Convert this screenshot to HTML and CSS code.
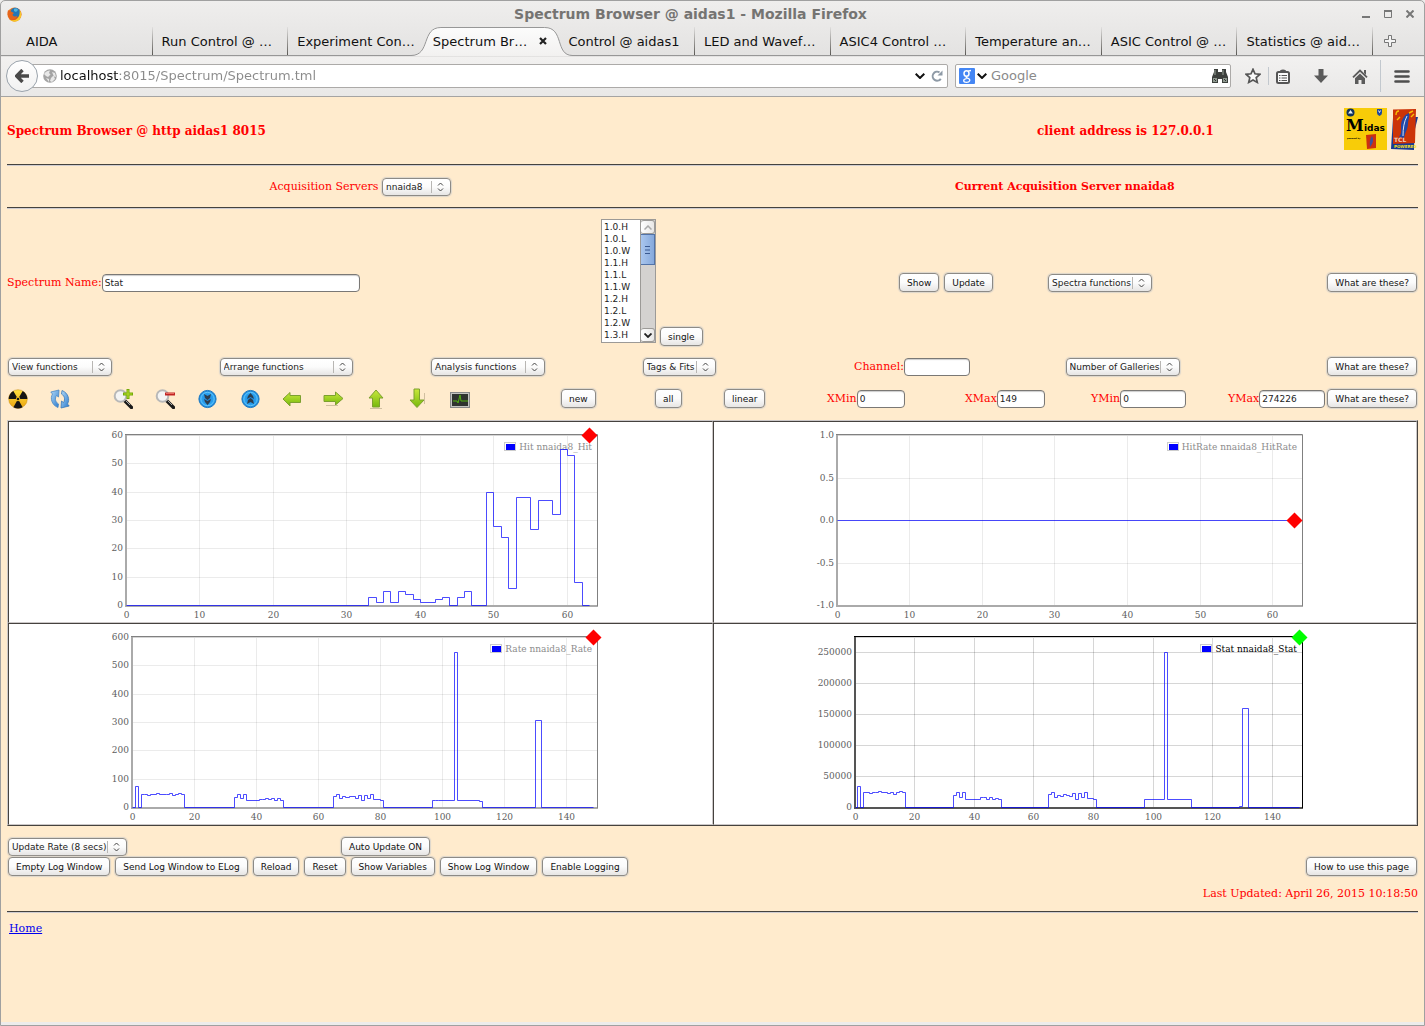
FILE: index.html
```
<!DOCTYPE html>
<html lang="en">
<head>
<meta charset="utf-8">
<title>Spectrum Browser @ aidas1</title>
<link rel="stylesheet" href="styles.css">
</head>
<body>
<svg class="defs" aria-hidden="true">
  <defs>
    <linearGradient id="green" x1="0" y1="0" x2="0" y2="1"><stop offset="0" stop-color="#c8e83c"/><stop offset="1" stop-color="#76b80c"/></linearGradient>
    <linearGradient id="blue" x1="0" y1="0" x2="1" y2="1"><stop offset="0" stop-color="#b5dcf8"/><stop offset="1" stop-color="#2878cc"/></linearGradient>
    <linearGradient id="yellow" x1="0" y1="0" x2="0" y2="1"><stop offset="0" stop-color="#ffe040"/><stop offset="1" stop-color="#eba410"/></linearGradient>
    <linearGradient id="ember" x1="0" y1="0" x2="1" y2="1"><stop offset="0" stop-color="#f28a1e"/><stop offset="1" stop-color="#d8401a"/></linearGradient>
    <linearGradient id="tabfill" x1="0" y1="0" x2="0" y2="1"><stop offset="0" stop-color="#fcfcfc"/><stop offset="1" stop-color="#f2f1f0"/></linearGradient>
    <radialGradient id="disc"><stop offset="0" stop-color="#1b84d8"/><stop offset="0.75" stop-color="#2ba4f2"/><stop offset="1" stop-color="#1b78cc"/></radialGradient>
  </defs>
</svg>

<div class="window">
  <header class="titlebar">
    <svg class="app-icon" width="15" height="15" viewBox="0 0 15 15" aria-hidden="true">
      <circle cx="7.500" cy="7.500" r="7" fill="url(#ember)"/>
      <circle cx="8.300" cy="5.800" r="5" fill="#2577b8"/>
      <path d="M7 2c2-1 4 0 4 1L9 5 7 4z" fill="#4fb4dd"/>
      <path d="M12.500 2.800C15 6 15 10 12 13c-3 2.400-7 2-9-.200 3 1 6 .500 8-2 1.500-2 2-5 1.500-8z" fill="#f8c828"/>
      <path d="M1 3c1 1 2 0 3 1.500L7 6 5.500 7.500C6 10 9 10 10.500 8.500 9.500 12 5 13.500 2.500 11 .500 9 .200 6 1 3z" fill="#e5641c"/>
    </svg>
    <h1 class="window-title">Spectrum Browser @ aidas1 - Mozilla Firefox</h1>
    <div class="window-buttons">
      <button aria-label="Minimize"><svg width="8" height="8" viewBox="0 0 8 8"><path d="M0 7h8" stroke="#777" stroke-width="2"/></svg></button>
      <button aria-label="Maximize"><svg width="8" height="8" viewBox="0 0 8 8"><path d="M.500 1v6.500h7V1" fill="none" stroke="#777"/><path d="M0 1h8" stroke="#777" stroke-width="2"/></svg></button>
      <button aria-label="Close"><svg width="8" height="8" viewBox="0 0 8 8"><path d="M0.500.500l7 7m0-7l-7 7" stroke="#777" stroke-width="2"/></svg></button>
    </div>
  </header>

  <nav class="tabs" aria-label="Tabs">
    <button class="tab">AIDA</button>
    <button class="tab">Run Control @ …</button>
    <button class="tab">Experiment Con…</button>
    <button class="tab active">
      <svg class="tab-shape" viewBox="0 0 162 29" preserveAspectRatio="none" aria-hidden="true"><path d="M0 29V28.500C20 28.500 10 .500 30 .500H134C154 .500 144 28.500 162 28.500V29z" fill="url(#tabfill)"/><path d="M0 28.500C20 28.500 10 .500 30 .500H134C154 .500 144 28.500 162 28.500" fill="none" stroke="#979797"/></svg>
      <span>Spectrum Br…</span>
      <svg class="tab-close" width="8" height="8" viewBox="0 0 8 8" aria-hidden="true"><path d="M1 1l6 6m0-6L1 7" stroke="#222" stroke-width="2.200"/></svg>
    </button>
    <button class="tab">Control @ aidas1</button>
    <button class="tab">LED and Wavef…</button>
    <button class="tab">ASIC4 Control …</button>
    <button class="tab">Temperature an…</button>
    <button class="tab">ASIC Control @ …</button>
    <button class="tab">Statistics @ aid…</button>
    <button class="new-tab" aria-label="New tab"><svg width="12" height="12" viewBox="0 0 12 12"><path d="M4.500.500h3v4h4v3h-4v4h-3v-4h-4v-3h4z" fill="#f4f4f4" stroke="#777"/></svg></button>
  </nav>

  <div class="toolbar">
    <button class="back" aria-label="Back"><svg width="14" height="14" viewBox="0 0 14 14"><path d="M7.500 1L1.700 7l5.800 6M2 7h12" fill="none" stroke="#4a4a4a" stroke-width="3.400"/></svg></button>
    <div class="field url">
      <svg width="14" height="14" viewBox="0 0 14 14" aria-hidden="true"><circle cx="7" cy="7" r="6.800" fill="#a4a4a4"/><path d="M1 5c2-3 4-3.500 6-3.500L6 4l1.500 1.500L5 8 3 7zM9 3l3 1 1 4-3-1-2 2-1 3 2 1 3-3zM3 9l3 1v3z" fill="#e8e8e8"/></svg>
      <input type="text" class="address" aria-label="Address" value="localhost:8015/Spectrum/Spectrum.tml">
      <button aria-label="History"><svg width="10" height="6" viewBox="0 0 10 6"><path d="M.700.700L5 5 9.300.700" fill="none" stroke="#111" stroke-width="2"/></svg></button>
      <button aria-label="Reload"><svg width="12" height="12" viewBox="0 0 12 12"><path d="M9.800 8.800A4.500 4.500 0 1 1 8.500 2.300" fill="none" stroke="#8e9aa6" stroke-width="2"/><path d="M6.500 5.500H11.500V.500z" fill="#8e9aa6"/></svg></button>
    </div>
    <div class="field search">
      <svg width="16" height="16" viewBox="0 0 16 16" aria-hidden="true"><rect width="16" height="16" rx="1" fill="#4486f4"/><ellipse cx="7.500" cy="5.500" rx="2.500" ry="2.800" fill="none" stroke="#fff" stroke-width="1.500"/><path d="M9 3.200l3-.700M7.500 8.300c-1 1 0 1.500 1.500 2 3 1 2 4-1.500 4s-4-3 0-3.700" fill="none" stroke="#fff" stroke-width="1.300"/></svg>
      <svg width="10" height="6" viewBox="0 0 10 6" aria-hidden="true"><path d="M.700.700L5 5 9.300.700" fill="none" stroke="#111" stroke-width="2"/></svg>
      <input type="search" aria-label="Search" placeholder="Google">
      <button aria-label="Find"><svg width="16" height="16" viewBox="0 0 16 16"><path d="M2 1h4v3h4V1h4v3l2 5v6h-6v-4H6v4H0V9l2-5z" fill="#3c403c"/><path d="M1 10h4v4H1zm10 0h4v4h-4z" fill="#8f9a90"/><path d="M3 2v5m8-5v5" stroke="#9aa59a"/><path d="M2 11l2 2m8-2l2 2" stroke="#333"/></svg></button>
    </div>
    <div class="tools">
      <button aria-label="Bookmark"><svg width="16" height="16" viewBox="0 0 16 16"><path d="M8 1.300l2 4.500 4.900.500-3.700 3.300 1.100 4.800L8 12l-4.300 2.400 1.100-4.800L1.100 6.300 6 5.800z" fill="#fafafa" stroke="#555" stroke-width="1.700"/></svg></button>
      <span class="divider"></span>
      <button aria-label="Bookmarks menu"><svg width="14" height="15" viewBox="0 0 14 15"><rect x="1" y="3" width="12" height="11" rx="1.500" fill="#fafafa" stroke="#555" stroke-width="2"/><path d="M4 3.500V1.500Q7-.500 10 1.500v2z" fill="#555"/><path d="M3 6.500h1.500M5.500 6.500H11M3 9h1.500M5.500 9H11M3 11.500h1.500M5.500 11.500H11" stroke="#555" stroke-width="1.200"/></svg></button>
      <button aria-label="Downloads"><svg width="14" height="14" viewBox="0 0 14 14"><path d="M4.500 0h5v6.500H14L7 14 0 6.500h4.500z" fill="#5b5b5b"/></svg></button>
      <button aria-label="Home page"><svg width="16" height="15" viewBox="0 0 16 15"><path d="M1 8.300L8 1.500l7 6.800" fill="none" stroke="#5b5b5b" stroke-width="1.800"/><path d="M8 4.500l5 4.800V15H9.500v-4h-3v4H3V9.300z" fill="#5b5b5b"/><path d="M12 1h2v5l-2-2z" fill="#5b5b5b"/></svg></button>
      <span class="divider tall"></span>
      <button aria-label="Menu"><svg width="16" height="13" viewBox="0 0 16 13"><path d="M1.500 1.500h13M1.500 6.500h13M1.500 11.500h13" stroke="#4e4e4e" stroke-width="2.600" stroke-linecap="round"/></svg></button>
    </div>
  </div>

  <main class="page">
    <div class="row banner">
      <h2>Spectrum Browser @ http aidas1 8015</h2>
      <h2>client address is 127.0.0.1</h2>
      <div class="logos">
        <svg width="43" height="42" viewBox="0 0 43 42" role="img" aria-label="Midas">
          <rect width="43" height="42" fill="#f8cc08"/>
          <circle cx="6.500" cy="4.500" r="4" fill="#12325e"/><path d="M4 5.500l2.500-3.500L9 5.500z" fill="#e8f0f4"/>
          <path d="M33 1h5v4q0 2-2.500 3Q33 7 33 5z" fill="#1f4a9c"/><path d="M34.500 2.500l1 2 1-2" fill="none" stroke="#e8e8f4"/>
          <text x="2" y="23" class="midas-m">M</text><text x="20" y="23" class="midas-rest">idas</text>
          <text x="3" y="31" class="midas-tiny">powered by</text>
          <path d="M22 27l10-1v14l-9 1z" fill="#cc3010"/><path d="M26 39q-1-7 2-11 2 4 0 8z" fill="#3b4f9c"/>
        </svg>
        <svg width="27" height="42" viewBox="0 0 27 42" role="img" aria-label="Tcl powered">
          <path d="M2 10l22-2-1 34L0 41z" fill="#173a94"/><path d="M22 9h5l-3 12z" fill="#173a94"/>
          <path d="M2 1.500L25 1l-1 34-22 1z" fill="#cc3408"/>
          <path d="M8 29c3-4 2-7 2-11 0-6 3-11 8-13 1 4-1 7-1 11 0 4-2 7-3 10l-1 4z" fill="#2148a8"/><path d="M12 28c0-8 1-14 4-20" stroke="#dce4f4" fill="none"/>
          <path d="M5 7q0-4 3-4M6 12l3-3M18 5l4-2M20 9l3-3" stroke="#f8c000" fill="none" stroke-width="1.400"/>
          <text x="3" y="34" class="tcl-name">TCL</text><text x="3" y="40" class="tcl-tag">POWERED</text>
        </svg>
      </div>
    </div>
    <hr>
    <div class="row servers">
      <div><label for="server">Acquisition Servers</label> <select id="server" class="w-server"><option>nnaida8</option></select></div>
      <strong>Current Acquisition Server nnaida8</strong>
    </div>
    <hr>
    <div class="row spectrum">
      <div class="pair"><label for="name">Spectrum Name:</label><input id="name" type="text" class="w-name" value="Stat"></div>
      <div class="picker">
        <div class="listbox">
          <select size="10" aria-label="Spectra">
            <option>1.0.H</option><option>1.0.L</option><option>1.0.W</option><option>1.1.H</option><option>1.1.L</option><option>1.1.W</option><option>1.2.H</option><option>1.2.L</option><option>1.2.W</option><option>1.3.H</option>
          </select>
          <div class="scrollbar" aria-hidden="true">
            <span class="arrow"><svg width="8" height="5" viewBox="0 0 8 5"><path d="M.500 4.500L4 1l3.500 3.500" fill="none" stroke="#aaa" stroke-width="1.500"/></svg></span>
            <span class="thumb"><svg width="5" height="8" viewBox="0 0 5 8"><path d="M0 .500h5M0 4h5M0 7.500h5" stroke="#3a5a92"/></svg></span>
            <span class="track"></span>
            <span class="arrow"><svg width="8" height="5" viewBox="0 0 8 5"><path d="M.500.500L4 4 7.500.500" fill="none" stroke="#222" stroke-width="1.800"/></svg></span>
          </div>
        </div>
        <button class="btn">single</button>
      </div>
      <div class="buttons"><button class="btn">Show</button><button class="btn">Update</button></div>
      <div class="ends">
        <select class="w-104" aria-label="Spectra functions"><option>Spectra functions</option></select>
        <button class="btn">What are these?</button>
      </div>
    </div>
    <div class="row functions">
      <div><select class="w-104" aria-label="View functions"><option>View functions</option></select></div>
      <div><select class="w-133" aria-label="Arrange functions"><option>Arrange functions</option></select></div>
      <div><select class="w-114" aria-label="Analysis functions"><option>Analysis functions</option></select></div>
      <div><select class="w-73" aria-label="Tags &amp; Fits"><option>Tags &amp; Fits</option></select></div>
      <div class="pair"><label for="channel">Channel:</label><input id="channel" type="text" class="w-66"></div>
      <div class="ends"><select class="w-114" aria-label="Number of Galleries"><option>Number of Galleries</option></select>
        <button class="btn">What are these?</button></div>
    </div>
    <div class="row actions">
      <button class="icon" aria-label="Zero"><svg width="20" height="20" viewBox="0 0 20 20"><circle cx="10" cy="10" r="9.300" fill="url(#yellow)" stroke="#c48a10" stroke-width=".500"/><path d="M10 10L5.300 1.900A9.400 9.400 0 0 0 .700 10zM10 10h9.300A9.400 9.400 0 0 0 14.700 1.900zM10 10l-4.600 8.200a9.400 9.400 0 0 0 9.200 0z" fill="#151515"/><circle cx="10" cy="10" r="2.200" fill="#f6c420"/><circle cx="10" cy="10" r="1.300" fill="#151515"/></svg></button>
      <button class="icon" aria-label="Refresh"><svg width="20" height="20" viewBox="0 0 20 20"><path d="M8 18.500C1.500 16 0 9 2.500 5L.800 3 9 1 8.500 8 6.500 6.500C4.500 10 5.500 13 8.500 15z" fill="url(#blue)" stroke="#4a88c4" stroke-width=".800"/><path d="M12 1.500C18.500 4 20 11 17.500 15l1.700 2-8.200 2 .500-7 2 1.500C15.500 10 14.500 7 11.500 5z" fill="url(#blue)" stroke="#3a78b8" stroke-width=".800"/></svg></button>
      <button class="icon" aria-label="Zoom in"><svg width="20" height="20" viewBox="0 0 20 20"><path d="M11.500 11.500l7 7" stroke="#1a1a1a" stroke-width="3.400" stroke-linecap="round"/><path d="M13 12l4 4" stroke="#aaa"/><circle cx="7.500" cy="7" r="5.800" fill="#f4f4f4" stroke="#b8b8b8" stroke-width="2"/><path d="M15 0v10M10 5h10" stroke="#74aa08" stroke-width="3"/><path d="M15 1v8M11 5h8" stroke="#b0da28" stroke-width="1.200"/></svg></button>
      <button class="icon" aria-label="Zoom out"><svg width="20" height="20" viewBox="0 0 20 20"><path d="M11.500 11.500l7 7" stroke="#1a1a1a" stroke-width="3.400" stroke-linecap="round"/><path d="M13 12l4 4" stroke="#aaa"/><circle cx="7.500" cy="7" r="5.800" fill="#f4f4f4" stroke="#b8b8b8" stroke-width="2"/><path d="M10 5h10" stroke="#c02424" stroke-width="3"/><path d="M11 4.500h8" stroke="#e86a60"/></svg></button>
      <button class="icon" aria-label="Page down"><svg width="20" height="20" viewBox="0 0 20 20"><circle cx="9.500" cy="10" r="8.600" fill="url(#disc)" stroke="#1d7cc4"/><circle cx="9.500" cy="10" r="6.700" fill="none" stroke="#5fc4fa"/><path d="M6 5l3.500 2L13 5l-1 4-2.500 2L7 9zM6 10l3.500 2 3.500-2-1 3-2.500 3L7 13z" fill="#2c3e50"/></svg></button>
      <button class="icon" aria-label="Page up"><svg width="20" height="20" viewBox="0 0 20 20"><circle cx="10.500" cy="10" r="8.600" fill="url(#disc)" stroke="#1d7cc4"/><circle cx="10.500" cy="10" r="6.700" fill="none" stroke="#5fc4fa"/><path d="M7 15l3.500-2 3.500 2-1-4-2.500-2L8 11zM7 10l3.500-2L14 10l-1-3-2.500-3L8 7z" fill="#2c3e50"/></svg></button>
      <button class="icon" aria-label="Left"><svg width="20" height="20" viewBox="0 0 20 20"><path d="M8 3.500L1 10l7 7v-3.500h10.500V6.500H8z" fill="url(#green)" stroke="#7ca030"/></svg></button>
      <button class="icon" aria-label="Right"><svg width="21" height="20" viewBox="0 0 21 20"><path d="M12.500 3L20 9.500l-7.500 6.500v-3.500H1v-6h11.500z" fill="url(#green)" stroke="#7ca030"/><path d="M3 16.500h12" stroke="#d0bfa0"/></svg></button>
      <button class="icon" aria-label="Up"><svg width="16" height="20" viewBox="0 0 16 20"><path d="M8 1L15 9h-3.500v9h-7V9H1z" fill="url(#green)" stroke="#7ca030"/><path d="M2 19.500h12" stroke="#d0bfa0"/></svg></button>
      <button class="icon" aria-label="Down"><svg width="16" height="21" viewBox="0 0 16 21"><path d="M8 19.500L1 12h4V1h5.500v11H15z" fill="url(#green)" stroke="#7ca030"/><path d="M15.500 5v11" stroke="#d0bfa0"/></svg></button>
      <button class="icon" aria-label="Scope"><svg width="20" height="20" viewBox="0 0 20 20"><rect x=".500" y="3.500" width="19" height="15" fill="#c4c4c0" stroke="#888"/><rect x="2" y="5" width="16" height="12" fill="#30332f"/><path d="M3 12h4l1 2 2-8 1 6h7" fill="none" stroke="#52b010"/></svg></button>
      <div><button class="btn">new</button></div>
      <div><button class="btn">all</button></div>
      <div><button class="btn">linear</button></div>
      <div class="pair"><label for="xmin">XMin</label><input id="xmin" type="text" class="w-48" value="0"></div>
      <div class="pair"><label for="xmax">XMax</label><input id="xmax" type="text" class="w-48" value="149"></div>
      <div class="pair"><label for="ymin">YMin</label><input id="ymin" type="text" class="w-66" value="0"></div>
      <div class="pair right"><label for="ymax">YMax</label><input id="ymax" type="text" class="w-66" value="274226"><button class="btn">What are these?</button></div>
    </div>

    <section class="gallery" aria-label="Spectra gallery">
      <div class="pane" data-chart="hit"></div>
      <div class="pane" data-chart="hitrate"></div>
      <div class="pane" data-chart="rate"></div>
      <div class="pane" data-chart="stat"></div>
    </section>

    <div class="row update">
      <div><select class="w-119" aria-label="Update rate"><option>Update Rate (8 secs)</option></select></div>
      <div><button class="btn">Auto Update ON</button></div>
    </div>
    <div class="row log">
      <button class="btn">Empty Log Window</button><button class="btn">Send Log Window to ELog</button><button class="btn">Reload</button><button class="btn">Reset</button><button class="btn">Show Variables</button><button class="btn">Show Log Window</button><button class="btn">Enable Logging</button>
      <button class="btn last">How to use this page</button>
    </div>
    <p class="updated">Last Updated: April 26, 2015 10:18:50</p>
    <hr>
    <p class="home"><a href="#home">Home</a></p>
  </main>
</div>
<script src="charts.js"></script>
</body>
</html>
```

FILE: styles.css
```
* { box-sizing: border-box; }
body { margin: 0; font-family: "DejaVu Serif", serif; font-size: 11px; line-height: 14px; color: #f00; background: #edeceb; }
h1, h2, p { margin: 0; }
svg { display: block; flex: none; }
.defs { position: absolute; width: 0; height: 0; }
button { font-family: "DejaVu Sans", sans-serif; border: 0; padding: 0; background: none; color: #111; }

.window { display: flex; flex-direction: column; min-height: 100vh; border: 1px solid #a0a0a0; border-radius: 5px 5px 0 0; background: linear-gradient(#efeeed, #e3e2e1 56px, #f2f1f0 56px, #e9e8e7 96px); }

.titlebar { display: flex; align-items: center; height: 26px; padding: 0 10px 0 6px; }
.window-title { flex: 1; padding-right: 3px; text-align: center; font: bold 14px/16px "DejaVu Sans", sans-serif; color: #757472; }
.window-buttons { display: flex; gap: 14px; }

.tabs { display: grid; grid-template-columns: repeat(10, minmax(0, 1fr)) 51px; height: 29px; padding-left: 16px; border-bottom: 1px solid #979797; }
.tab { position: relative; display: flex; align-items: center; padding: 0 0 0 9px; font-size: 13px; white-space: nowrap; border-right: 1px solid; border-image: linear-gradient(#e6e5e4, #55534f) 1; }
.tab:has(+ .active), .tab.active { border-right-width: 0; }
.tab.active { z-index: 1; justify-content: space-between; padding: 0 12px 0 9px; }
.tab-shape { position: absolute; left: -13px; top: 0; width: calc(100% + 26px); height: 29px; }
.tab.active span, .tab-close { position: relative; }
.new-tab { padding-left: 11px; }

.toolbar { display: flex; align-items: center; height: 41px; padding: 0 14px 0 5px; border-bottom: 1px solid #a5a4a3; }
.back { position: relative; z-index: 1; display: flex; align-items: center; justify-content: center; width: 32px; height: 32px; margin-right: -8px; border: 1px solid #9aa3ac; border-radius: 50%; background: linear-gradient(#fff, #f1f1f1); }
.field { display: flex; align-items: center; height: 24px; border: 1px solid #acaaa8; border-radius: 2px; background: #fff; }
.field input { flex: 1; min-width: 0; padding: 0; border: 0; outline: 0; background: none; font: 13px/20px "DejaVu Sans", sans-serif; color: #111; }
.field input::placeholder { color: #8a8a8a; opacity: 1; }
.url { flex: 1; gap: 6px; padding: 0 4px 0 12px; margin-right: 7px; }
.field .address { margin-left: -3px; background: linear-gradient(90deg, #111 59px, #8a8a8a 59px); background-clip: text; -webkit-background-clip: text; -webkit-text-fill-color: transparent; }
.search { width: 276px; gap: 4px; padding: 0 2px 0 3px; }
.search svg + svg { margin-left: -2px; }
.tools { display: flex; align-items: center; margin-left: 14px; }
.tools button { margin-right: 24px; }
.tools button:first-child, .tools .divider { margin-right: 7px; }
.divider { width: 1px; height: 18px; background: #c2c8ce; }
.tools .tall { height: 32px; margin: 0 13px 0 -12px; }
.tools button:last-child { margin-right: 0; }

.page { flex: 1; padding: 11px 6px 0; border-bottom: 3px solid #edeceb; background: #ffebcd; }
.row { padding: 0 1px; }
hr { height: 2px; margin: 0; border: 0; border-top: 1px solid #45423e; border-bottom: 1px solid #cfccd0; }

.btn { height: 19px; padding: 0 7px; border: 1px solid #8c8a86; border-radius: 4px; background: linear-gradient(#fff, #fbfbfb 50%, #e6e5e4); box-shadow: 0 0 1px 1px #dcd6cc; font-size: 9px; white-space: nowrap; }
.page input, .page select { height: 18px; margin: 0; border: 1px solid #7a7875; border-radius: 4px; font: 9px/14px "DejaVu Sans", sans-serif; color: #222; background: #fff; outline: 0; }
.page input { padding: 0 2px; box-shadow: inset 0 1px 1px #ccc; }
.page select { appearance: none; padding: 0 18px 0 3px; border-color: #8c8a86; background: url("data:image/svg+xml,%3Csvg xmlns='http://www.w3.org/2000/svg' width='19' height='14'%3E%3Cpath d='M.5 1v12' stroke='%23b8b6b3'/%3E%3Cpath d='M7 5.500L9.500 3 12 5.500M7 8.500L9.500 11 12 8.500' fill='none' stroke='%23444'/%3E%3C/svg%3E") right center no-repeat, linear-gradient(#fff, #fbfbfb 50%, #e6e5e4); box-shadow: 0 0 1px 1px #dcd6cc; vertical-align: middle; }
.w-server { width: 69px; }
.w-name { width: 258px; }
.w-48 { width: 48px; }
.w-66 { width: 66px; }
.w-73 { width: 73px; }
.w-104 { width: 104px; }
.w-114 { width: 114px; }
.w-119 { width: 119px; }
.w-133 { width: 133px; }

.pair, .ends, .buttons, .picker { display: flex; align-items: center; white-space: nowrap; }
.ends { justify-content: space-between; padding-right: 1px; }
.buttons { gap: 5px; }
.pair.right { justify-content: flex-end; }
.pair.right .btn { margin-left: 2px; }

.banner { display: grid; grid-template-columns: 1030fr 307fr 74px; align-items: center; padding: 0; margin-bottom: 14px; }
.banner h2 { padding-top: 4px; font-size: 12px; line-height: 16px; white-space: nowrap; }
.logos { display: flex; gap: 4px; }
.midas-m { font: bold 16px "DejaVu Serif", serif; }
.midas-rest { font: bold 9px "DejaVu Sans", sans-serif; }
.midas-tiny { font: bold 2px "DejaVu Sans", sans-serif; }
.tcl-name { font: bold 6px "DejaVu Sans", sans-serif; fill: #f0d0c0; }
.tcl-tag { font: bold 4px "DejaVu Sans", sans-serif; fill: #f8e020; }

.servers { display: grid; grid-template-columns: 1fr 1fr; align-items: center; justify-items: center; height: 41px; }

.spectrum { display: grid; grid-template-columns: 594fr 298fr 149fr 370fr; align-items: center; padding: 0; margin-top: 10px; }
.picker { align-items: flex-end; gap: 4px; }
.listbox { display: flex; width: 55px; height: 124px; margin-bottom: 3px; border: 1px solid #9c9a97; background: #fff; }
.listbox select { flex: 1; min-width: 0; height: 122px; padding: 2px 0 0; border: 0; border-radius: 0; box-shadow: none; background: none; overflow: hidden; scrollbar-width: none; }
.listbox option { min-height: 12px; height: 12px; padding: 0 2px; line-height: 12px; }
.scrollbar { display: flex; flex-direction: column; width: 15px; background: #d4d2d0; border-left: 1px solid #9c9a97; }
.arrow, .thumb { display: flex; align-items: center; justify-content: center; height: 14px; border: 1px solid #9c9a97; border-left: 0; border-radius: 3px; background: linear-gradient(90deg, #fff, #e8e7e6); }
.thumb { height: 31px; border-color: #5273a8; border-radius: 0; background: linear-gradient(90deg, #a9c6ee, #86a9dc); }
.track { flex: 1; }

.functions { display: grid; grid-template-columns: 15fr 15fr 15fr 15fr 15fr 25fr; align-items: center; padding-right: 0; margin-top: 11px; }
.actions { display: grid; grid-template-columns: 42fr 63fr 42fr 43fr 42fr 42fr 41fr 45fr 41fr 41fr 111fr 94fr 69fr 103fr 138fr 126fr 126fr 200fr; align-items: center; height: 21px; margin: 12px 0 11px; }
.actions > * { min-width: 0; }

.gallery { display: grid; grid-template-columns: 705fr 704fr; border: 1px solid #ccc8c8; border-right-color: #45423e; border-bottom-color: #45423e; background: #fff; }
.pane { min-width: 0; border: 1px solid #ccc8c8; border-left-color: #45423e; border-top-color: #45423e; }
.pane svg { max-width: 100%; height: auto; }
.pane text { font: 9px "DejaVu Serif", serif; fill: #606060; }
.pane .end { text-anchor: end; }
.pane .mid { text-anchor: middle; }
.pane .legend { fill: #8c8c8c; }
.pane .legend.on { fill: #000; }

.update { display: grid; grid-template-columns: 333fr 1076fr; align-items: center; margin-top: 11px; }
.log { display: flex; flex-wrap: wrap; gap: 5px; margin-top: 1px; }
.last { margin-left: auto; }
.updated { margin: 11px 0 10px; text-align: right; }
.home { padding: 9px 2px; }
.home a { color: #00e; }
```

FILE: charts.js
```
// Step-histogram plots for the gallery panes.
function bins(last, runs) {
  const out = new Array(last).fill(0);
  for (const [start, values] of runs) values.forEach((v, i) => { out[start + i] = v; });
  return out;
}

const flat = (n, v) => new Array(n).fill(v);

const charts = {
  hit: {
    label: "Hit nnaida8_Hit", left: 117, xMax: 64, xStep: 10, yMin: 0, yMax: 60, yStep: 10, mark: 60,
    data: bins(63, [[33, [3, 1, 5, 1, 5, 4, 2, 1, 1, 2, 3, 0, 3, 5]], [49, [40, 28, 24, 6, 38, 38, 27, 37, 37, 32, 55, 53, 8]]])
  },
  hitrate: {
    label: "HitRate nnaida8_HitRate", left: 123, xMax: 64, xStep: 10, yMin: -1, yMax: 1, yStep: 0.5, digits: 1, mark: 0,
    data: bins(63, [])
  },
  rate: {
    label: "Rate nnaida8_Rate", left: 123, xMax: 150, xStep: 20, yMin: 0, yMax: 600, yStep: 100, mark: 600,
    data: bins(149, [[1, [74]], [3, [46, 47, 43, 46, 46, 49, 46, 46, 45, 49, 41, 46, 49, 46]],
      [33, [36, 45, 32, 45, 25, 25, 25, 25, 27, 28, 31, 28, 32, 25, 31, 25]],
      [65, [39, 45, 32, 38, 35, 38, 38, 32, 42, 25, 42, 32, 45, 27, 27, 25]],
      [97, [25, 23, ...flat(5, 25), 547, ...flat(7, 25), 22]], [130, [308, 308]]])
  },
  stat: {
    label: "Stat nnaida8_Stat", left: 141, xMax: 150, xStep: 20, yMin: 0, yMax: 274226, yStep: 50000, mark: 274226, selected: true,
    data: bins(149, [[1, [33500]], [3, [24500, 24500, 22000, 23500, 24500, 26000, 24500, 24500, 23000, 24500, 21000, 24500, 26000, 24000]],
      [33, [19000, 24500, 16000, 23500, ...flat(5, 12700), 15500, 16500, 13000, 16500, 12700, 15000, 12700]],
      [65, [21000, 24500, 16000, 19500, 17500, 20500, 20000, 17500, 23000, 12700, 23000, 16500, 24500, 14500, 14500, 13500]],
      [97, [...flat(7, 12700), 250000, ...flat(8, 12700)]], [129, [1500, 160000, 160000]]])
  }
};

function draw(c) {
  const right = 588, top = 13, bottom = 183;
  const x = v => Math.floor(c.left + v * (right - c.left) / c.xMax) + 0.5;
  const y = v => Math.round(bottom - (v - c.yMin) * (bottom - top) / (c.yMax - c.yMin)) + 0.5;
  const dark = c.selected ? "#000" : "#808080", soft = c.selected ? "#555" : "#aaa";
  let grid = "", labels = "";
  for (let v = 0; v < c.xMax; v += c.xStep) {
    if (v > 0) grid += `M${x(v)} ${top}V${bottom}`;
    labels += `<text class="mid" x="${x(v)}" y="196">${v}</text>`;
  }
  for (let v = c.yMin; v <= c.yMax; v += c.yStep) {
    if (v > c.yMin && v < c.yMax) grid += `M${c.left} ${y(v)}H${right}`;
    labels += `<text class="end" x="${c.left - 3}" y="${y(v) + 2.5}">${v.toFixed(c.digits || 0)}</text>`;
  }
  // Only a change of level adds a step to the outline.
  let line = `M${x(0)} ${y(c.data[0])}`;
  c.data.forEach((v, i) => {
    if (i > 0 && v !== c.data[i - 1]) line += `H${x(i)}V${y(v)}`;
  });
  line += `H${x(c.data.length)}`;
  const mx = x(c.data.length), my = y(c.mark);
  return `<svg width="702" height="200" viewBox="0 0 702 200" role="img" aria-label="${c.label}">
    <path d="${grid}" stroke="#000" stroke-opacity="${c.selected ? 0.16 : 0.08}"/>
    <path d="M${c.left - 0.5} 13.5H${right}" stroke="#d5d5d5"/>
    <path d="M${c.left} 12V184M${c.left - 1} 184H${right + 1}" stroke="${soft}" stroke-width="2"/>
    <path d="M${c.left - 1} 12.500H${right + 0.5}V184" fill="none" stroke="${dark}"/>
    ${labels}
    <text class="end legend${c.selected ? " on" : ""}" x="583" y="28">${c.label}</text>
    <g class="swatch"><rect x="0.500" y="20.500" width="11" height="8" fill="#fff" stroke="#ccc"/><rect x="2" y="22" width="9" height="6" fill="#00f"/></g>
    <path d="${line}" fill="none" stroke="#00f" stroke-opacity="0.7"/>
    <path d="M${mx} ${my - 8}l8 8-8 8-8-8z" fill="${c.selected ? "#0f0" : "#f00"}"/>
  </svg>`;
}

for (const pane of document.querySelectorAll("[data-chart]")) {
  pane.innerHTML = draw(charts[pane.dataset.chart]);
  const text = pane.querySelector(".legend");
  const start = Math.round(583 - text.getComputedTextLength()) - 15;
  pane.querySelector(".swatch").setAttribute("transform", `translate(${start} 0)`);
}
```
